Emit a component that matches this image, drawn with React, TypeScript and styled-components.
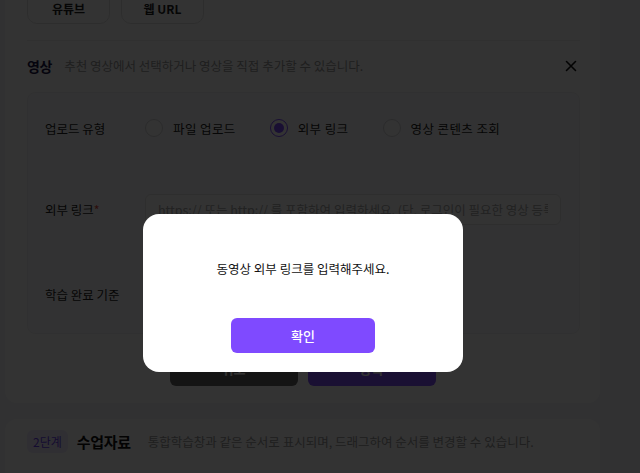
import styled, { createGlobalStyle } from 'styled-components';

const GlobalStyle = createGlobalStyle`
  html, body {
    margin: 0;
    padding: 0;
    background: #f4f5f8;
    font-family: 'Noto Sans CJK KR', 'Noto Sans', sans-serif;
    overflow: hidden;
  }
  * { box-sizing: border-box; }
`;

const Page = styled.div`
  width: 640px;
  height: 473px;
  overflow: hidden;
  padding: 0 40px 0 5px;
  display: flex;
  flex-direction: column;
  gap: 16px;
`;

const Card = styled.section<{ $cut?: boolean }>`
  background: #fff;
  padding: 0 20px 17px 22px;
  margin-top: ${p => (p.$cut ? '-12px' : '0')};
  border-radius: ${p => (p.$cut ? '0 0 12px 12px' : '12px')};
`;

const SourceRow = styled.div`
  display: flex;
  gap: 11px;
  padding-bottom: 16px;
  border-bottom: 1px solid #eeeeee;
`;

const SourceButton = styled.button`
  width: 83px;
  height: 36px;
  border: 1px solid #e2e2e2;
  border-radius: 10px;
  background: #fff;
  font-family: inherit;
  font-size: 12px;
  font-weight: 600;
  color: #222;
  padding-top: 6px;
`;

const SectionHead = styled.div`
  display: flex;
  align-items: center;
  gap: 12px;
  height: 51px;
  padding-bottom: 2px;
`;

const SectionTitle = styled.h3`
  margin: 0;
  font-size: 14px;
  font-weight: 600;
  color: #201848;
  letter-spacing: -0.3px;
`;

const Hint = styled.span`
  font-size: 12.5px;
  color: #9a9a9a;
`;

const Close = styled.button`
  margin-left: auto;
  margin-right: 2px;
  width: 14px;
  height: 14px;
  padding: 0;
  border: 0;
  background: none;
  display: flex;
  align-items: center;
  justify-content: center;
`;

const Panel = styled.div`
  background: #fbfbfc;
  border: 1px solid #f1f1f3;
  border-radius: 8px;
  padding: 0 18px 0 17px;
  display: flex;
  flex-direction: column;
`;

const FieldRow = styled.div<{ $h: number }>`
  display: grid;
  grid-template-columns: 100px 1fr;
  align-items: center;
  height: ${p => p.$h}px;
`;

const Label = styled.span`
  font-size: 12.5px;
  color: #222;
`;

const Req = styled.span`
  color: #e0483c;
`;

const RadioGroup = styled.div`
  display: flex;
  align-items: center;
`;

const RadioItem = styled.label`
  display: flex;
  align-items: center;
  gap: 10px;
  margin-right: 34px;
  font-size: 12.5px;
  letter-spacing: 0.4px;
  color: #222;
`;

const RadioDot = styled.span<{ $on?: boolean }>`
  width: 18px;
  height: 18px;
  border-radius: 50%;
  border: 1px solid ${p => (p.$on ? '#7f4aff' : '#d4d4d8')};
  background: #fff;
  display: flex;
  align-items: center;
  justify-content: center;
  &::after {
    content: '';
    display: ${p => (p.$on ? 'block' : 'none')};
    width: 10px;
    height: 10px;
    border-radius: 50%;
    background: #7f4aff;
  }
`;

const TextInput = styled.input`
  width: 416px;
  height: 31px;
  border: 1px solid #e3e3e6;
  border-radius: 6px;
  padding: 0 12px;
  font-family: inherit;
  font-size: 12.5px;
  background: #fff;
  &::placeholder { color: #a8a8a8; }
`;

const SmallInput = styled(TextInput)`
  width: 200px;
`;

const Actions = styled.div`
  display: flex;
  justify-content: center;
  gap: 10px;
  margin-top: 16px;
  padding-right: 2px;
`;

const ActionButton = styled.button<{ $primary?: boolean }>`
  width: 128px;
  height: 36px;
  border: 0;
  border-radius: 6px;
  background: ${p => (p.$primary ? '#8250ff' : '#666666')};
  color: #fff;
  font-family: inherit;
  font-size: 13px;
  font-weight: 600;
`;

const StepHead = styled.div`
  display: flex;
  align-items: center;
  gap: 9px;
  height: 45px;
`;

const StepBadge = styled.span`
  background: #f0ebff;
  color: #6b3ef0;
  font-size: 12px;
  padding: 3px 6px;
  border-radius: 6px;
`;

const StepTitle = styled.h3`
  margin: 0 8px 0 0;
  font-size: 15px;
  font-weight: 700;
  color: #111;
  letter-spacing: -0.3px;
`;

const Overlay = styled.div`
  position: fixed;
  inset: 0;
  background: rgba(0, 0, 0, 0.8);
`;

const Modal = styled.div`
  position: fixed;
  left: 143px;
  top: 214px;
  width: 320px;
  height: 158px;
  background: #fff;
  border-radius: 16px;
  display: flex;
  flex-direction: column;
  align-items: center;
  padding-top: 45px;
`;

const ModalText = styled.p`
  margin: 0;
  font-size: 12.5px;
  color: #111;
`;

const ConfirmButton = styled.button`
  margin-top: 40px;
  width: 144px;
  height: 35px;
  border: 0;
  border-radius: 6px;
  background: #7f4aff;
  color: #fff;
  font-family: inherit;
  font-size: 13px;
  font-weight: 500;
`;

const XIcon = () => (
  <svg width="12" height="12" viewBox="0 0 12 12">
    <path d="M1.5 1.5 L10.5 10.5 M10.5 1.5 L1.5 10.5" stroke="#111" strokeWidth="1.6" strokeLinecap="round" />
  </svg>
);

const App = () => {
  return (
    <>
      <GlobalStyle />
      <Page>
        <Card $cut>
          <SourceRow>
            <SourceButton>유튜브</SourceButton>
            <SourceButton>웹 URL</SourceButton>
          </SourceRow>
          <SectionHead>
            <SectionTitle>영상</SectionTitle>
            <Hint>추천 영상에서 선택하거나 영상을 직접 추가할 수 있습니다.</Hint>
            <Close aria-label="닫기">
              <XIcon />
            </Close>
          </SectionHead>
          <Panel>
            <FieldRow $h={70}>
              <Label>업로드 유형</Label>
              <RadioGroup>
                <RadioItem>
                  <RadioDot />
                  파일 업로드
                </RadioItem>
                <RadioItem>
                  <RadioDot $on />
                  외부 링크
                </RadioItem>
                <RadioItem>
                  <RadioDot />
                  영상 콘텐츠 조회
                </RadioItem>
              </RadioGroup>
            </FieldRow>
            <FieldRow $h={92}>
              <Label>
                외부 링크<Req>*</Req>
              </Label>
              <TextInput placeholder="https:// 또는 http:// 를 포함하여 입력하세요. (단, 로그인이 필요한 영상 등록 불가)" />
            </FieldRow>
            <FieldRow $h={78}>
              <Label>학습 완료 기준</Label>
              <SmallInput />
            </FieldRow>
          </Panel>
          <Actions>
            <ActionButton>취소</ActionButton>
            <ActionButton $primary>등록</ActionButton>
          </Actions>
        </Card>
        <Card>
          <StepHead>
            <StepBadge>2단계</StepBadge>
            <StepTitle>수업자료</StepTitle>
            <Hint>통합학습창과 같은 순서로 표시되며, 드래그하여 순서를 변경할 수 있습니다.</Hint>
          </StepHead>
        </Card>
      </Page>
      <Overlay />
      <Modal>
        <ModalText>동영상 외부 링크를 입력해주세요.</ModalText>
        <ConfirmButton>확인</ConfirmButton>
      </Modal>
    </>
  );
};

export default App;
